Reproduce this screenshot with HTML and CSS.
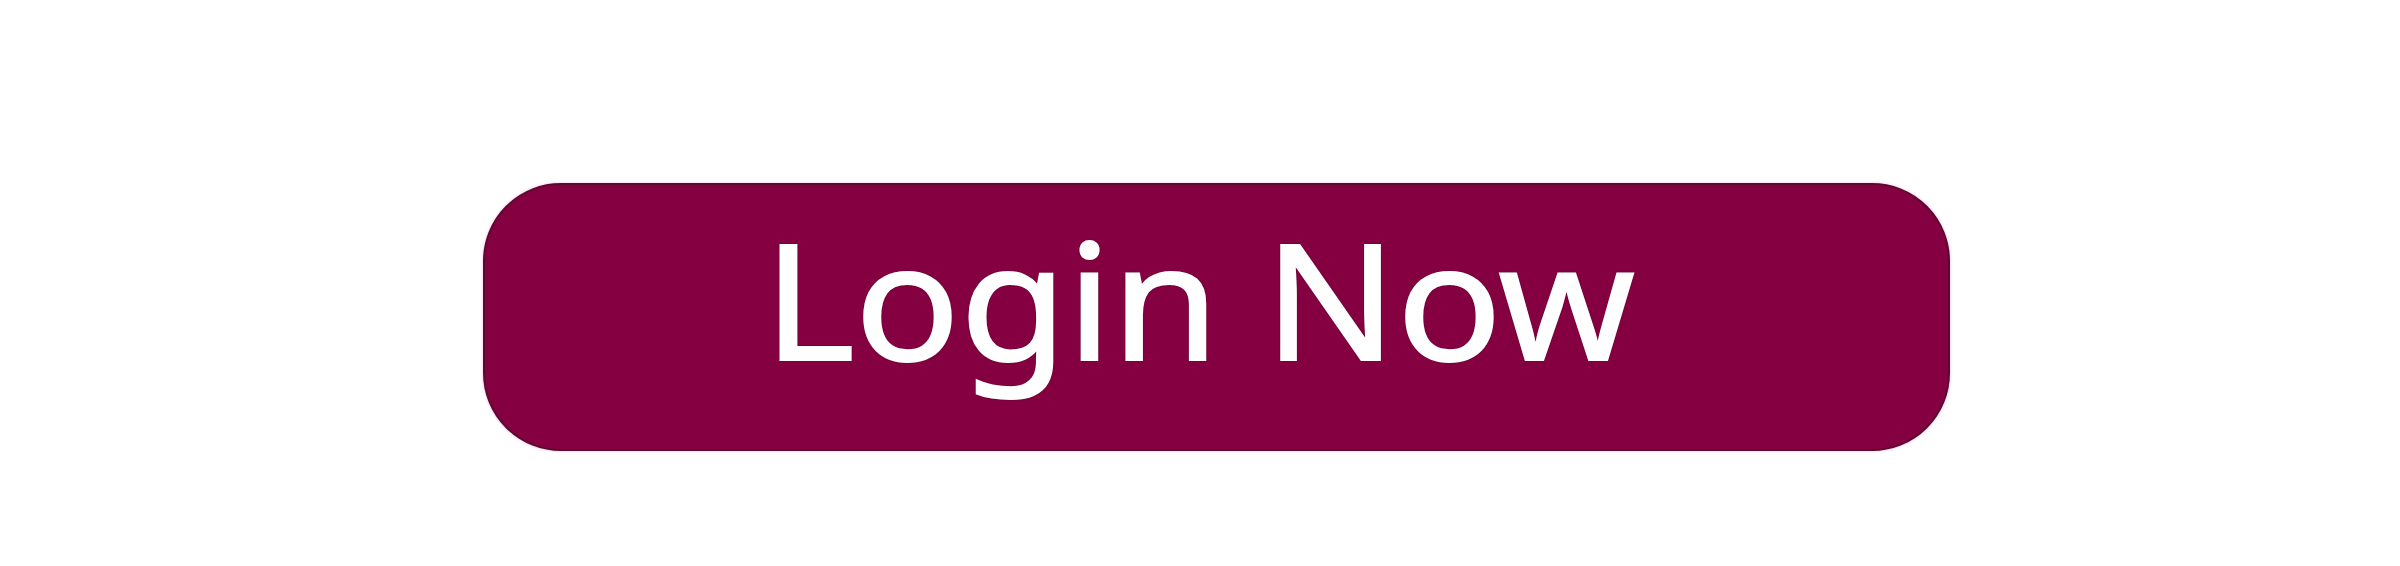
FILE: index.html
```html
<!DOCTYPE html>
<html>
<head>
<meta charset="utf-8">
<link rel="stylesheet" href="styles.css">
</head>
<body>
<main class="stage">
  <button class="login-btn" type="button"><span class="label">Login Now</span></button>
</main>
</body>
</html>
```
FILE: styles.css
```css
html, body {
  margin: 0;
  padding: 0;
  background: #ffffff;
}
.stage {
  width: 2400px;
  height: 566px;
  box-sizing: border-box;
  padding: 183px 0 0 483px;
  display: flex;
  align-items: flex-start;
}
.login-btn {
  width: 1467px;
  height: 268px;
  border: 2px solid #5a0a30;
  border-radius: 78px;
  background: #850040;
  box-shadow: 0 0 3px rgba(255, 120, 200, 0.6);
  display: flex;
  align-items: center;
  justify-content: center;
  padding: 0 34px 40px 0;
  box-sizing: border-box;
  cursor: pointer;
}
.label {
  font-family: "Noto Sans", sans-serif;
  font-size: 161px;
  font-weight: 400;
  color: #ffffff;
  line-height: 1;
  white-space: nowrap;
  display: inline-block;
  transform: scaleX(1.08);
  -webkit-text-stroke: 2px #ffffff;
  text-shadow: 0 0 2px #2a0012, 0 0 2px #2a0012, 0 0 1px #2a0012;
}
```
